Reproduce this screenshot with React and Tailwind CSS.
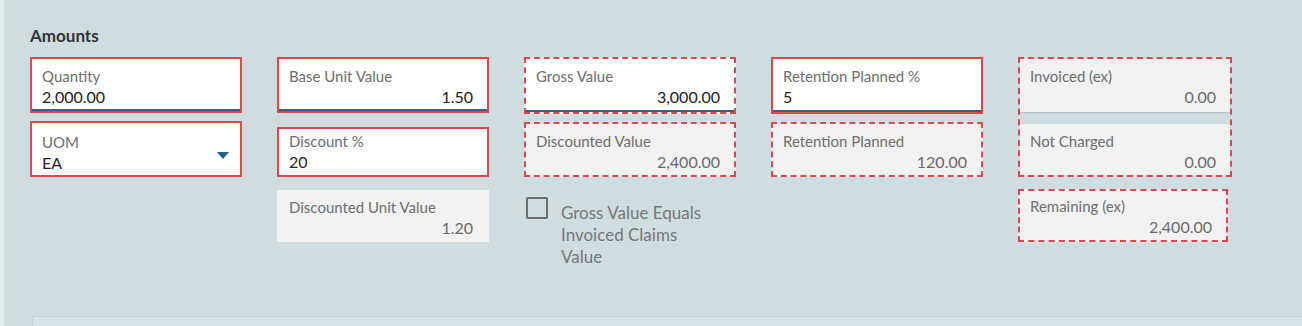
import React from "react"

const FONT = { fontFamily: "Lato, 'Open Sans', sans-serif" }

function Field({ label, value, align = "left", border = "solid", grey = false, underline = false, pt = "pt-[8px]", className = "" }) {
  const borderCls =
    border === "solid"
      ? "border-2 border-[#e0474c]"
      : border === "dashed"
        ? "border-2 border-dashed border-[#e0474c]"
        : "border-2 border-transparent"
  return (
    <div className={`relative ${borderCls} ${grey ? "bg-[#f2f2f2]" : "bg-white"} ${className}`}>
      <div className={`px-[10px] pr-[14px] ${pt}`}>
        <div className="text-[15px] leading-[19px] text-[#6e6e6e]">{label}</div>
        <div
          className={`text-[16px] leading-[22px] ${align === "right" ? "text-right" : "text-left"} ${
            grey ? "text-[#6a6a6a]" : "text-[#222]"
          }`}
        >
          {value}
        </div>
      </div>
      {underline && <div className="absolute bottom-0 left-0 right-0 h-[2px] bg-[#2f5f8c]" />}
    </div>
  )
}

function GreyBlock({ label, value, className = "" }) {
  return (
    <div className={`bg-[#f2f2f2] px-[10px] pt-[8px] pr-[14px] ${className}`}>
      <div className="text-[15px] leading-[19px] text-[#6e6e6e]">{label}</div>
      <div className="text-right text-[16px] leading-[22px] text-[#6a6a6a]">{value}</div>
    </div>
  )
}

export default function App() {
  return (
    <div className="flex h-[326px] w-[1302px] overflow-hidden bg-[#cfdde1]" style={FONT}>
      <div className="w-[4px] shrink-0 bg-[#e6edef]" />
      <div className="flex flex-1 flex-col pl-[26px] pt-[25px]">
        <h3 className="text-[17px] font-bold leading-[22px] text-[#333]">Amounts</h3>

        <div className="mt-[10px] flex gap-[35px]">
          {/* column 1 */}
          <div className="flex w-[212px] flex-col gap-[8px]">
            <Field label="Quantity" value="2,000.00" underline className="h-[56px]" />
            <div className="relative">
              <Field label="UOM" value="EA" pt="pt-[10px]" className="h-[56px]" />
              <svg className="absolute right-[13px] top-[31px]" width="12" height="7" viewBox="0 0 12 7">
                <path d="M0 0h12L6 7z" fill="#1f5d8c" />
              </svg>
            </div>
          </div>

          {/* column 2 */}
          <div className="flex w-[212px] flex-col">
            <Field label="Base Unit Value" value="1.50" align="right" underline className="h-[56px]" />
            <Field label="Discount %" value="20" pt="pt-[3px]" className="mt-[14px] h-[50px]" />
            <Field
              label="Discounted Unit Value"
              value="1.20"
              align="right"
              border="none"
              grey
              pt="pt-[6px]"
              className="mt-[13px] h-[52px]"
            />
          </div>

          {/* column 3 */}
          <div className="flex w-[212px] flex-col">
            <Field label="Gross Value" value="3,000.00" align="right" border="dashed" underline className="h-[57px]" />
            <Field
              label="Discounted Value"
              value="2,400.00"
              align="right"
              border="dashed"
              grey
              className="mt-[8px] h-[55px]"
            />
            <label className="mt-[20px] flex items-start gap-[13px] pl-[2px]">
              <span className="h-[22px] w-[22px] shrink-0 rounded-[2px] border-2 border-[#6b6b6b] bg-transparent" />
              <span className="mt-[5px] w-[150px] text-[17px] leading-[22px] text-[#777]">Gross Value Equals Invoiced Claims Value</span>
            </label>
          </div>

          {/* column 4 */}
          <div className="flex w-[212px] flex-col">
            <Field label="Retention Planned %" value="5" underline className="h-[57px]" />
            <Field
              label="Retention Planned"
              value="120.00"
              align="right"
              border="dashed"
              grey
              className="mt-[8px] h-[55px]"
            />
          </div>

          {/* column 5 */}
          <div className="flex w-[214px] flex-col">
            <div className="flex h-[120px] flex-col border-2 border-dashed border-[#e0474c]">
              <GreyBlock label="Invoiced (ex)" value="0.00" className="h-[53px] shadow-[0_1px_1px_rgba(0,0,0,0.12)]" />
              <div className="h-[12px]" />
              <GreyBlock label="Not Charged" value="0.00" className="flex-1" />
            </div>
            <Field
              label="Remaining (ex)"
              value="2,400.00"
              align="right"
              border="dashed"
              grey
              pt="pt-[6px]"
              className="mt-[12px] h-[53px] w-[210px]"
            />
          </div>
        </div>

        <div className="mt-auto ml-[2px] h-[10px] border-l border-t border-[#c3d4d4] bg-[#d6e2e5]" />
      </div>
    </div>
  )
}
